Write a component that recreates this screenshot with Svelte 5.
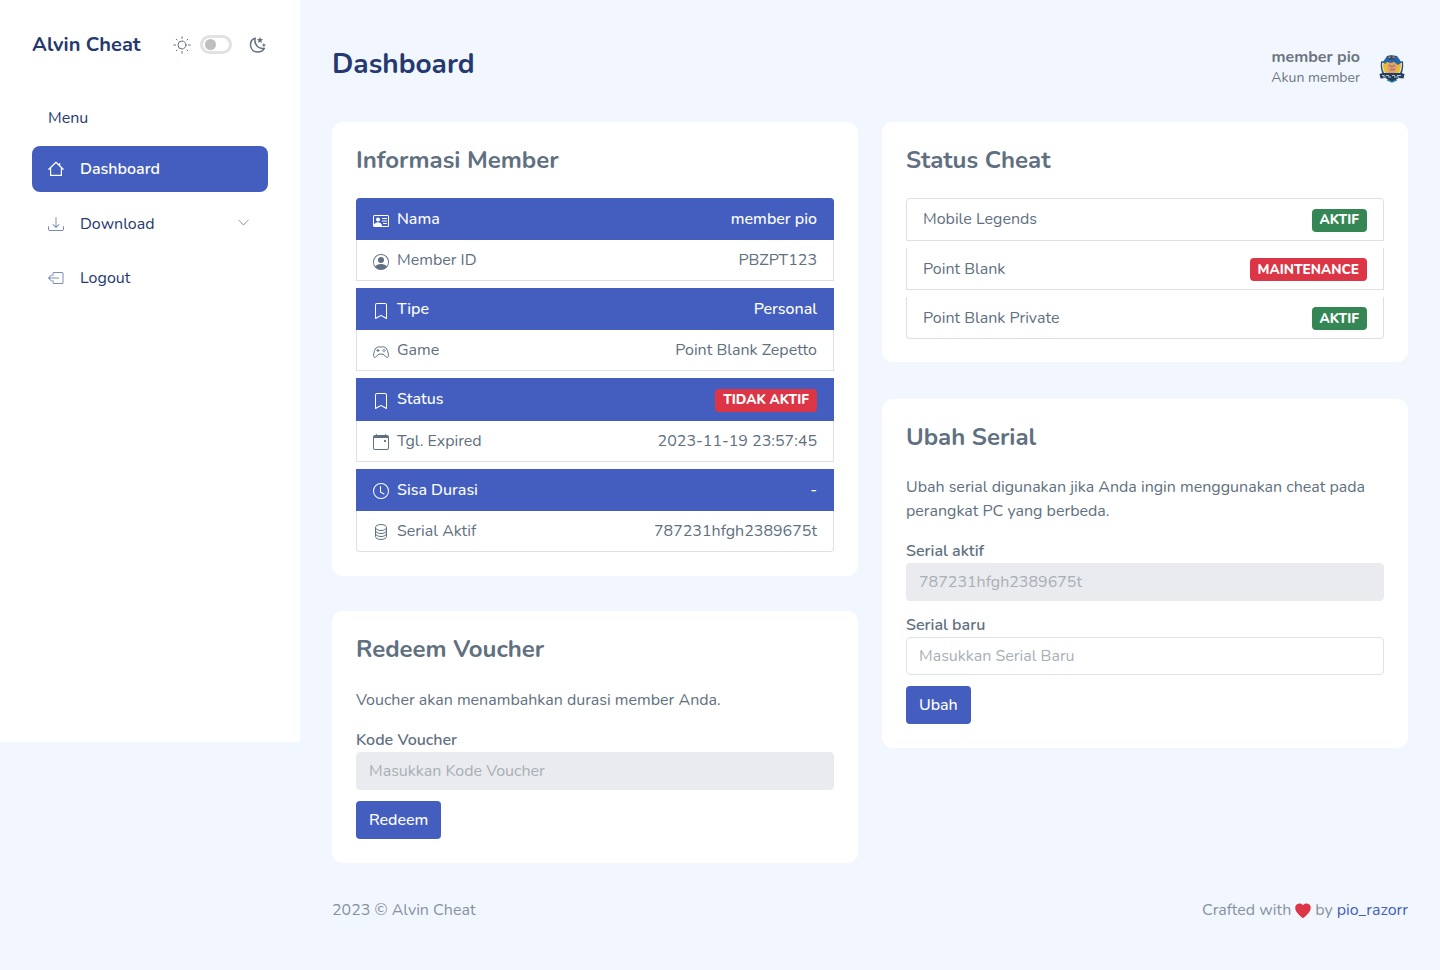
<script>
  const icons = {
    download: ['M.5 9.9a.5.5 0 0 1 .5.5v2.5a1 1 0 0 0 1 1h12a1 1 0 0 0 1-1v-2.5a.5.5 0 0 1 1 0v2.5a2 2 0 0 1-2 2H2a2 2 0 0 1-2-2v-2.5a.5.5 0 0 1 .5-.5z', 'M7.646 11.854a.5.5 0 0 0 .708 0l3-3a.5.5 0 0 0-.708-.708L8.5 10.293V1.5a.5.5 0 0 0-1 0v8.793L5.354 8.146a.5.5 0 1 0-.708.708l3 3z'],
    logout: ['M4.5 3.5a1.5 1.5 0 0 1 1.5-1.5h8A1.5 1.5 0 0 1 15.5 3.5v9A1.5 1.5 0 0 1 14 14H6a1.5 1.5 0 0 1-1.5-1.5v-2a.5.5 0 0 1 1 0v2a.5.5 0 0 0 .5.5h8a.5.5 0 0 0 .5-.5v-9a.5.5 0 0 0-.5-.5H6a.5.5 0 0 0-.5.5v2a.5.5 0 0 1-1 0z', 'M.146 8.354a.5.5 0 0 1 0-.708l3-3a.5.5 0 1 1 .708.708L1.707 7.5H10.5a.5.5 0 0 1 0 1H1.707l2.147 2.146a.5.5 0 0 1-.708.708z'],
    chevron: ['M1.646 4.646a.5.5 0 0 1 .708 0L8 10.293l5.646-5.647a.5.5 0 0 1 .708.708l-6 6a.5.5 0 0 1-.708 0l-6-6a.5.5 0 0 1 0-.708z'],
    person: ['M11 6a3 3 0 1 1-6 0 3 3 0 0 1 6 0z', 'M0 8a8 8 0 1 1 16 0A8 8 0 0 1 0 8zm8-7a7 7 0 0 0-5.468 11.37C3.242 11.226 4.805 10 8 10s4.757 1.225 5.468 2.37A7 7 0 0 0 8 1z'],
    bookmark: ['M2 2a2 2 0 0 1 2-2h8a2 2 0 0 1 2 2v13.5a.5.5 0 0 1-.777.416L8 13.101l-5.223 2.815A.5.5 0 0 1 2 15.5V2zm2-1a1 1 0 0 0-1 1v12.566l4.723-2.482a.5.5 0 0 1 .554 0L13 14.566V2a1 1 0 0 0-1-1H4z'],
    clock: ['M8 3.5a.5.5 0 0 0-1 0V9a.5.5 0 0 0 .252.434l3.5 2a.5.5 0 0 0 .496-.868L8 8.71V3.5z', 'M8 16A8 8 0 1 0 8 0a8 8 0 0 0 0 16zm7-8A7 7 0 1 1 1 8a7 7 0 0 1 14 0z'],
    calendar: ['M11 6.5a.5.5 0 0 1 .5-.5h1a.5.5 0 0 1 .5.5v1a.5.5 0 0 1-.5.5h-1a.5.5 0 0 1-.5-.5v-1z', 'M3.5 0a.5.5 0 0 1 .5.5V1h8V.5a.5.5 0 0 1 1 0V1h1a2 2 0 0 1 2 2v11a2 2 0 0 1-2 2H2a2 2 0 0 1-2-2V3a2 2 0 0 1 2-2h1V.5a.5.5 0 0 1 .5-.5zM1 4v10a1 1 0 0 0 1 1h12a1 1 0 0 0 1-1V4H1z'],
    heart: ['M8 2.3C6.6.1 3.700.1 2 1.300-1.200 3.700-.6 9.300 8 15.200 16.600 9.300 17.200 3.700 14 1.300 12.300.1 9.400.1 8 2.300z']
  };

  const groups = [
    [
      { icon: 'vcard', label: 'Nama', value: 'member pio', active: true },
      { icon: 'person', label: 'Member ID', value: 'PBZPT123' }
    ],
    [
      { icon: 'bookmark', label: 'Tipe', value: 'Personal', active: true },
      { icon: 'game', label: 'Game', value: 'Point Blank Zepetto' }
    ],
    [
      { icon: 'bookmark', label: 'Status', badge: 'TIDAK AKTIF', active: true },
      { icon: 'calendar', label: 'Tgl. Expired', value: '2023-11-19 23:57:45' }
    ],
    [
      { icon: 'clock', label: 'Sisa Durasi', value: '-', active: true },
      { icon: 'database', label: 'Serial Aktif', value: '787231hfgh2389675t' }
    ]
  ];

  const cheats = [
    { name: 'Mobile Legends', status: 'AKTIF' },
    { name: 'Point Blank', status: 'MAINTENANCE', down: true },
    { name: 'Point Blank Private', status: 'AKTIF' }
  ];
</script>

{#snippet icon(name, size = 16)}
  <svg class="icon {name}" width={size} height={size} viewBox="0 0 16 16" fill="currentColor" aria-hidden="true">
    {#if name === 'vcard'}
      <path d="M1.500 2h13A1.500 1.500 0 0 1 16 3.500v9a1.500 1.500 0 0 1-1.500 1.500h-13A1.500 1.500 0 0 1 0 12.500v-9A1.500 1.500 0 0 1 1.500 2zM1.500 3a.5.5 0 0 0-.5.5V12c.6-1.500 2-2.500 4-2.500S8.500 10.800 9 13h5.500a.5.5 0 0 0 .5-.5v-9a.5.5 0 0 0-.5-.5z" fill-rule="evenodd" />
      <circle cx="5" cy="6.500" r="2" />
      <path d="M1 13v-1c.6-1.500 2-2.500 4-2.500s3.500 1 4 3.500z" />
      <path d="M9.500 5.500h4M9.500 8h4M10.500 10.500h3" stroke="currentColor" stroke-linecap="round" />
    {:else if name === 'game'}
      <path d="M4.100 3.500C5 2.500 6 3 8 3s3-.5 3.900.5c1.600.2 2.300 2.200 2.900 4.300.7 2.400 1.100 5-.3 5.600-1.600.6-2.800-3-4.500-3.200-1.300-.2-2.700-.2-4 0-1.700.2-2.900 3.800-4.500 3.200-1.400-.6-1-3.200-.3-5.600.6-2.100 1.300-4.100 2.900-4.300zM5 5v3M3.500 6.500h3" fill="none" stroke="currentColor" />
      <circle cx="11" cy="5.500" r=".65" /><circle cx="11" cy="7.700" r=".65" /><circle cx="9.900" cy="6.600" r=".65" /><circle cx="12.100" cy="6.600" r=".65" />
    {:else if name === 'database'}
      <path d="M2.500 3.500v9C2.500 14.200 5 15.500 8 15.500s5.500-1.300 5.500-3v-9M2.500 6.500c0 1.700 2.500 3 5.500 3s5.500-1.300 5.500-3M2.500 9.500c0 1.700 2.500 3 5.500 3s5.500-1.300 5.500-3" fill="none" stroke="currentColor" />
      <ellipse cx="8" cy="3.500" rx="5.500" ry="3" fill="none" stroke="currentColor" />
    {:else}
      {#each icons[name] as d}<path {d} fill-rule={name === 'person' ? 'evenodd' : 'nonzero'} />{/each}
    {/if}
  </svg>
{/snippet}

<div class="page">
  <aside>
    <div class="brand">
      <a class="logo" href="#top">Alvin Cheat</a>
      <div class="theme">
        <svg class="sun" width="18" height="18" viewBox="0 0 18 18" fill="none" stroke="currentColor" stroke-linecap="round">
          <circle cx="9" cy="9" r="4" />
          <path d="M9 .8v1.700M9 15.500v1.700M.8 9h1.700M15.500 9h1.700M3.200 3.200l.8.8M14 14l.8.8M3.200 14.800l.8-.8M14 4l.8-.8" />
        </svg>
        <span class="switch"><i></i></span>
        <svg class="moon" width="18" height="18" viewBox="0 0 18 18" fill="none" stroke="currentColor">
          <path d="M6.200 2.200C2.900 3.100 1.400 5.700 1.500 9c.2 4.300 3.300 7 7.100 7 3 0 5.400-1.200 6.700-3.700-5.200 1.100-10.600-3.200-9.100-10.100z" stroke-width="1.500" stroke-linejoin="round" />
          <path d="M11 1l.9 2.100 2.200.2-1.700 1.400.6 2.200-2-1.200-2 1.200.6-2.200-1.700-1.400 2.200-.2zM14.900 7l.7 1.500 1.500.6-1.500.6-.7 1.500-.7-1.500-1.500-.6 1.500-.6z" fill="currentColor" stroke="none" />
        </svg>
      </div>
    </div>
    <nav>
      <div class="menu-title">Menu</div>
      <a class="item current" href="#dashboard">
        <svg class="icon" width="16" height="16" viewBox="0 0 16 16" fill="none" stroke="currentColor" stroke-width="1.200" stroke-linejoin="round" stroke-linecap="round"><path d="M.8 8.300L8 1.300l7.200 7M2.600 7v7.400h10.800V7M11.700 2.500v2" /></svg>
        Dashboard
      </a>
      <a class="item" href="#download">{@render icon('download')}Download<span class="arrow">{@render icon('chevron', 13)}</span></a>
      <a class="item" href="#logout">{@render icon('logout')}Logout</a>
    </nav>
  </aside>

  <main>
    <header>
      <h1>Dashboard</h1>
      <div class="user">
        <div class="who">
          <strong>member pio</strong>
          <small>Akun member</small>
        </div>
        <svg class="avatar" width="28" height="30" viewBox="0 0 28 30">
          <path d="M3 7.500L7 7l7-5 7 5 4 .5c1 9-1 16-11 20.500C4 23.500 2 16 3 7.500z" fill="#294c70" />
          <path d="M4 9l10-3 10 3c0 8-2 13-10 17C6 22 4 17 4 9z" fill="#e9e9dc" />
          <path d="M5 9.500l9-3.500 9 3.500c0 7-2 11-9 15-7-4-9-8-9-15z" fill="#edbc32" />
          <path d="M5 8l2-3 2-3 4-1 6 1 3 4 1 3-3 2-4-3-3 1-4-1-2 2z" fill="#2466ad" />
          <path d="M9 2h9l-2 3.500h-5z" fill="#344862" />
          <path d="M10.500 2.500h2V4h-2zM14.500 2.500h2V4h-2z" fill="#d48c79" />
          <path d="M9 12l2-3h5l4 3-2 4-1 5-3 2-4-3v-4z" fill="#dfa078" />
          <path d="M11 11l3 2 3-2M12 15l2 1 3-1" fill="none" stroke="#8c5541" stroke-width=".8" />
          <path d="M1.500 20l3-1h19l3 1-1 4.500-5-.5-6.500 3-6.500-3-5 .5z" fill="#243f5f" />
          <path d="M4 21.500h2.500M8 21.500h3M14 21.500h3M19 21.500h4M5 23h3M10 23h3M16 23h5" stroke="#b9c8ca" />
          <path d="M9 26l5 2 5-2" fill="none" stroke="#2382a1" stroke-width="1.200" />
        </svg>
      </div>
    </header>

    <div class="columns">
      <div class="column left">
        <section class="card member">
          <h2>Informasi Member</h2>
          <div class="groups">
            {#each groups as group}
              <ul>
                {#each group as row}
                  <li class:active={row.active} class:tall={row.badge}>
                    <span class="name">{@render icon(row.icon)}{row.label}</span>
                    {#if row.badge}
                      <span class="badge danger">{row.badge}</span>
                    {:else}
                      <span>{row.value}</span>
                    {/if}
                  </li>
                {/each}
              </ul>
            {/each}
          </div>
        </section>

        <section class="card voucher">
          <h2>Redeem Voucher</h2>
          <p>Voucher akan menambahkan durasi member Anda.</p>
          <div class="label">Kode Voucher</div>
          <div class="field disabled">Masukkan Kode Voucher</div>
          <button>Redeem</button>
        </section>
      </div>

      <div class="column right">
        <section class="card cheats">
          <h2>Status Cheat</h2>
          <div class="cheat-list">
            {#each cheats as cheat}
              <div class="cheat">
                <span>{cheat.name}</span>
                <span class="badge" class:danger={cheat.down}>{cheat.status}</span>
              </div>
            {/each}
          </div>
        </section>

        <section class="card serial">
          <h2>Ubah Serial</h2>
          <p>Ubah serial digunakan jika Anda ingin menggunakan cheat pada perangkat PC yang berbeda.</p>
          <div class="label">Serial aktif</div>
          <div class="field disabled">787231hfgh2389675t</div>
          <div class="label second">Serial baru</div>
          <div class="field">Masukkan Serial Baru</div>
          <button>Ubah</button>
        </section>
      </div>
    </div>

    <footer>
      <span>2023 © Alvin Cheat</span>
      <span class="credit">Crafted with<span class="love">{@render icon('heart')}</span>by<a href="#author">pio_razorr</a></span>
    </footer>
  </main>
</div>

<style>
  :global(body) {
    margin: 0;
    background: #f2f7ff;
  }
  .page {
    display: flex;
    align-items: flex-start;
    box-sizing: border-box;
    width: 1440px;
    height: 970px;
    overflow: hidden;
    background: #f2f7ff;
    color: #607080;
    font: 400 16px/24px Nunito, Lato, sans-serif;
  }
  a { color: inherit; text-decoration: none; }
  .icon { display: block; flex: none; overflow: visible; }

  aside {
    box-sizing: border-box;
    width: 300px;
    height: 742px;
    padding: 32px;
    background: #fff;
    color: #25396f;
    flex: none;
  }
  .brand { display: flex; align-items: center; height: 24px; }
  .logo { width: 141px; padding-top: 1px; font-size: 20px; font-weight: 700; white-space: nowrap; }
  .theme { display: flex; align-items: center; height: 20px; color: #607080; }
  .sun { margin-top: 2px; }
  .switch {
    box-sizing: border-box;
    width: 32px;
    height: 19px;
    margin: 0 17px 0 9px;
    padding: 2px;
    border: 3px solid #e2e2e4;
    border-radius: 10px;
    background: #fff;
  }
  .switch i { display: block; width: 11px; height: 11px; margin: -1px 0 0 0; border-radius: 50%; background: #bfbfbf; }
  .moon { margin-top: 2px; }
  nav { padding-top: 50px; }
  .menu-title { height: 24px; padding-left: 16px; margin-bottom: 16px; }
  .item {
    display: flex;
    align-items: center;
    gap: 16px;
    box-sizing: border-box;
    height: 46px;
    margin-bottom: 8.500px;
    padding: 0 16px;
    border-radius: 8px;
  }
  .item .icon { color: #7c8db5; }
  .item.current { background: #435ebe; color: #fff; font-weight: 600; }
  .item.current .icon { color: #fff; }
  .arrow { margin: -3px 2px 0 auto; }
  .arrow .icon { color: #9a9fae; }

  main { flex: 1; padding: 0 32px; }
  header { display: flex; justify-content: space-between; height: 122px; }
  h1, h2, p, ul { margin: 0; padding: 0; }
  h1 { padding-top: 47px; color: #25396f; font-size: 28px; line-height: 34px; font-weight: 700; }
  .user { display: flex; padding-top: 45px; }
  .who { display: flex; flex-direction: column; align-items: flex-end; margin-right: 18px; color: #6c757d; }
  .who strong { height: 22px; font-weight: 700; }
  .who small { font-size: 14px; line-height: 21px; }
  .avatar { margin: 9px 2px 0 0; }

  .columns { display: flex; gap: 24px; }
  .column { display: flex; flex-direction: column; width: 526px; }
  .left { gap: 35px; }
  .right { gap: 37px; }
  .card { box-sizing: border-box; padding: 24px; border-radius: 11px; background: #fff; }
  h2 { height: 28px; font-size: 24px; line-height: 28px; font-weight: 700; }
  .member { height: 454px; }
  .voucher { height: 252px; }
  .cheats { height: 240px; }
  .serial { height: 349px; }

  .groups { display: flex; flex-direction: column; gap: 7px; margin-top: 24px; }
  ul { list-style: none; }
  li {
    display: flex;
    justify-content: space-between;
    box-sizing: border-box;
    height: 41px;
    padding: 8px 16px;
    border: 1px solid #dfe0e1;
    border-top: 0;
  }
  li.active { height: 42px; padding-top: 9px; border-color: #435ebe; background: #435ebe; color: #fff; font-weight: 500; }
  li.tall { height: 43px; }
  ul:first-child li:first-child { border-radius: 4px 4px 0 0; }
  ul:last-child li:last-child { border-radius: 0 0 4px 4px; }
  .name { display: flex; gap: 8px; }
  .name .icon { margin-top: 6px; }
  .name .calendar, .name .clock, .name .database { margin-top: 5px; }
  .badge {
    box-sizing: border-box;
    height: 23px;
    margin-top: 2px;
    padding: 0 8px;
    border-radius: 4px;
    background: #348754;
    color: #fff;
    font-size: 13.600px;
    font-weight: 800;
    line-height: 22px;
  }
  .badge.danger { background: #dc3545; }

  .cheat-list { display: flex; flex-direction: column; gap: 7px; margin-top: 24px; }
  .cheat {
    display: flex;
    justify-content: space-between;
    box-sizing: border-box;
    height: 42px;
    padding: 9px 16px 0;
    border: 1px solid #dfe0e1;
    border-top: 0;
  }
  .cheat .badge { margin-top: 1px; line-height: 23px; }
  .cheat:first-child { height: 43px; padding-top: 8px; border-top: 1px solid #dfe0e1; border-radius: 4px 4px 0 0; }
  .cheat:first-child .badge { margin-top: 2px; line-height: 22px; }
  .cheat:last-child { border-radius: 0 0 4px 4px; }

  p { padding-top: 25px; }
  .serial p { padding-top: 24px; }
  .label { margin-top: 16px; height: 24px; font-weight: 600; }
  .label.second { margin-top: 12px; }
  .field {
    box-sizing: border-box;
    height: 38px;
    padding: 6px 12px;
    border: 1px solid #dfe3e8;
    border-radius: 4px;
    color: #a8afb6;
  }
  .field.disabled { border-color: #e9ebee; background: #e9ebee; }
  button {
    display: block;
    height: 38px;
    margin: 11px 0 0;
    padding: 0 13px;
    border: 0;
    border-radius: 4px;
    background: #435ebe;
    color: #fff;
    font: inherit;
    font-weight: 500;
  }

  footer { display: flex; justify-content: space-between; padding-top: 35px; color: #8792a0; }
  .credit { display: flex; }
  .credit a { margin-left: 4px; color: #435ebe; }
  .love { margin: 5px 4px 0; color: #dc3545; }
</style>
